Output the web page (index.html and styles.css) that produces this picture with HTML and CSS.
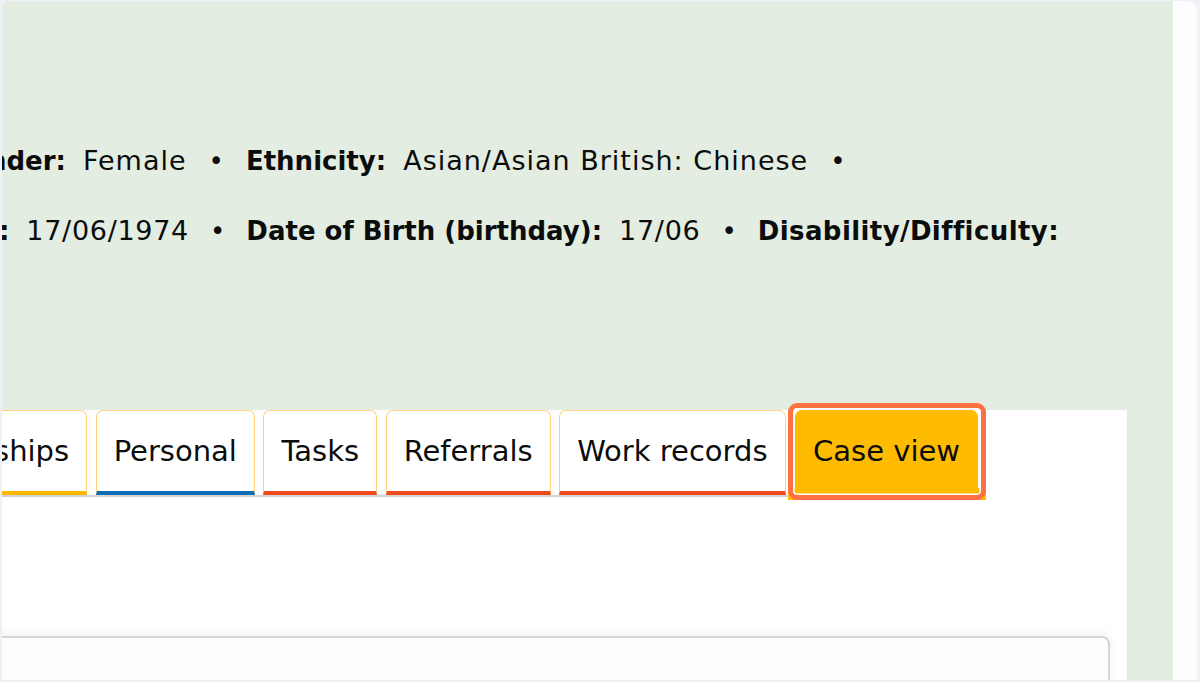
FILE: index.html
```html
<!DOCTYPE html>
<html lang="en">
<head>
<meta charset="utf-8">
<title>Case view</title>
<link rel="stylesheet" href="styles.css">
</head>
<body>
<div class="frame">
  <div class="window">
    <main class="main">
      <section class="summary">
        <div class="row row-one">
          <span class="label">Gender:</span><span class="value">Female</span><span class="sep">•</span>
          <span class="label">Ethnicity:</span><span class="value">Asian/Asian British: Chinese</span><span class="sep">•</span>
        </div>
        <div class="row row-two">
          <span class="label">Date of Birth:</span><span class="value">17/06/1974</span><span class="sep">•</span>
          <span class="label">Date of Birth (birthday):</span><span class="value">17/06</span><span class="sep">•</span>
          <span class="label label-wide">Disability/Difficulty:</span>
        </div>
      </section>
      <section class="panel">
        <div class="tablist">
          <div class="tab tab-yellow">Relationships</div>
          <div class="tab tab-blue">Personal</div>
          <div class="tab tab-red">Tasks</div>
          <div class="tab tab-red">Referrals</div>
          <div class="tab tab-red">Work records</div>
          <div class="tab tab-active">Case view</div>
        </div>
        <div class="card"></div>
      </section>
    </main>
    <aside class="side"></aside>
  </div>
</div>
</body>
</html>
```

FILE: styles.css
```css
* { box-sizing: border-box; }
html, body { margin: 0; padding: 0; }
body {
  background: #f1f0f7;
  font-family: "DejaVu Sans", "Liberation Sans", sans-serif;
  color: #0b0c0c;
}
.frame {
  width: 1200px;
  height: 682px;
  padding: 1px 3px 2px 2px;
}
.window {
  display: flex;
  height: 679px;
  border-radius: 8px 10px 0 0;
  overflow: hidden;
}
.main {
  flex: 1;
  background: #e3ede2;
  overflow: hidden;
  padding-top: 125px;
}
.side {
  width: 24px;
  background: #fdfdfd;
}
.summary {
  display: flex;
  flex-direction: column;
}
.row {
  display: flex;
  align-items: baseline;
  white-space: nowrap;
  font-size: 26px;
  line-height: 70px;
}
.row-one { margin-left: -53px; }
.row-two { margin-left: -192px; }
.label {
  font-weight: bold;
  margin-right: 17px;
}
.label-wide { letter-spacing: 0.4px; }
.value {
  font-size: 27px;
  letter-spacing: 1px;
}
.row-two .value { letter-spacing: 0.7px; }
.sep {
  margin: 0 22px;
}
.row-two .sep { margin: 0 21px; }
.panel {
  background: #ffffff;
  margin-top: 144px;
  margin-right: 46px;
  height: 300px;
  overflow: visible;
}
.tablist {
  display: inline-flex;
  gap: 8.5px;
  margin-left: -144px;
  padding-right: 8px;
  border-bottom: 2px solid #d3d3d3;
}
.tab {
  height: 85px;
  line-height: 81px;
  padding: 0 17px;
  font-size: 29px;
  background: #ffffff;
  border: 1px solid #ffd37e;
  border-bottom: 4px solid #f24e1e;
  border-radius: 7px 7px 0 0;
  white-space: nowrap;
  color: #0b0c0c;
}
.tab-yellow { border-bottom-color: #ffb800; }
.tab-blue { border-bottom-color: #0b6db5; }
.tab-red { border-bottom-color: #f04a1c; }
.tab-active {
  position: relative;
  background: #ffbb00;
  border-color: #ffbb00;
  border-bottom: 3px solid #ee3f1d;
  margin-left: 1px;
}
.tab-active::before {
  content: "";
  position: absolute;
  left: -8px;
  right: -9px;
  bottom: -8px;
  height: 12px;
  background: #ffbb00;
  z-index: 0;
}
.tab-active::after {
  content: "";
  position: absolute;
  left: -8px;
  right: -9px;
  top: -8px;
  bottom: -8px;
  border: 5px solid #ff7043;
  border-radius: 9px;
  box-shadow: inset 0 0 0 1.5px #ffffff;
  z-index: 1;
}
.card {
  margin-top: 139px;
  margin-left: -20px;
  margin-right: 17px;
  height: 120px;
  background: #fdfdfd;
  border: 2px solid #d4d4d4;
  border-radius: 8px;
  box-shadow: 0 -3px 8px rgba(0, 0, 0, 0.06);
}
```
